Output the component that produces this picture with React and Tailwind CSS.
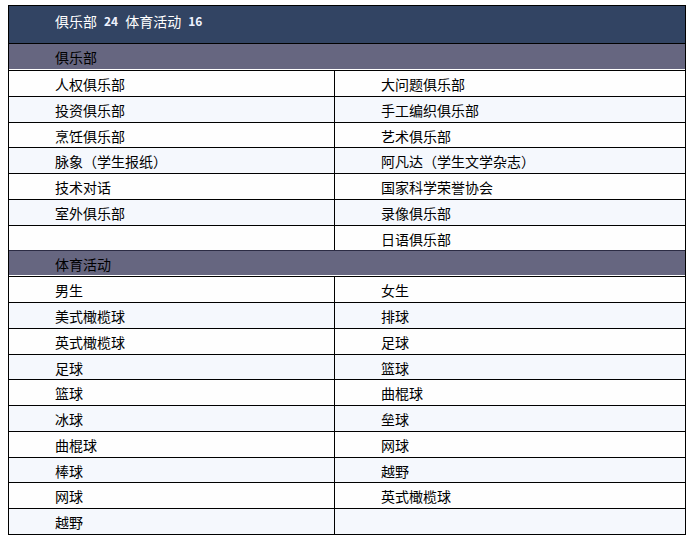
import React from 'react';

const clubs = [
  ['人权俱乐部', '大问题俱乐部'],
  ['投资俱乐部', '手工编织俱乐部'],
  ['烹饪俱乐部', '艺术俱乐部'],
  ['脉象（学生报纸）', '阿凡达（学生文学杂志）'],
  ['技术对话', '国家科学荣誉协会'],
  ['室外俱乐部', '录像俱乐部'],
  ['', '日语俱乐部'],
];

const sports = [
  ['男生', '女生'],
  ['美式橄榄球', '排球'],
  ['英式橄榄球', '足球'],
  ['足球', '篮球'],
  ['篮球', '曲棍球'],
  ['冰球', '垒球'],
  ['曲棍球', '网球'],
  ['棒球', '越野'],
  ['网球', '英式橄榄球'],
  ['越野', ''],
];

const font = { fontFamily: '"Noto Sans CJK SC", "Noto Sans", sans-serif' };

// grey band that opens each group
const SectionHeader = ({ title, first }) => (
  <div
    className={`h-[26px] bg-[#666680] border-b border-white pl-[46px] pt-[4px] text-[14px] leading-[18px] text-black ${
      first ? '' : 'border-t border-t-[#2c2c44]'
    }`}
  >
    {title}
  </div>
);

const Row = ({ left, right, index }) => (
  <div
    className={`grid grid-cols-[326px_1fr] h-[25.75px] border-t border-black text-[14px] leading-[18px] text-black ${
      index % 2 === 0 ? 'bg-[#fefefe]' : 'bg-[#f5f8fd]'
    }`}
  >
    <div className="border-r border-black pl-[46px] pt-[4px]">{left}</div>
    <div className="pl-[46px] pt-[4px]">{right}</div>
  </div>
);

export default function App() {
  return (
    <div className="w-[694px] h-[543px] bg-white pt-[5px] pl-[8px]" style={font}>
      <div className="w-[678px] border border-black">
        <div className="h-[38px] bg-[#324463] border-b border-black pl-[46px] pt-[6px] text-white text-[14px] leading-[18px] flex items-start gap-[7px]">
          <span>俱乐部</span>
          <span className="font-bold text-[12px] leading-[18px] text-[#eef2ff]">24</span>
          <span>体育活动</span>
          <span className="font-bold text-[12px] leading-[18px] text-[#eef2ff]">16</span>
        </div>
        <SectionHeader title="俱乐部" first />
        {clubs.map(([l, r], i) => (
          <Row key={'c' + i} left={l} right={r} index={i} />
        ))}
        <SectionHeader title="体育活动" />
        {sports.map(([l, r], i) => (
          <Row key={'s' + i} left={l} right={r} index={i} />
        ))}
      </div>
    </div>
  );
}
